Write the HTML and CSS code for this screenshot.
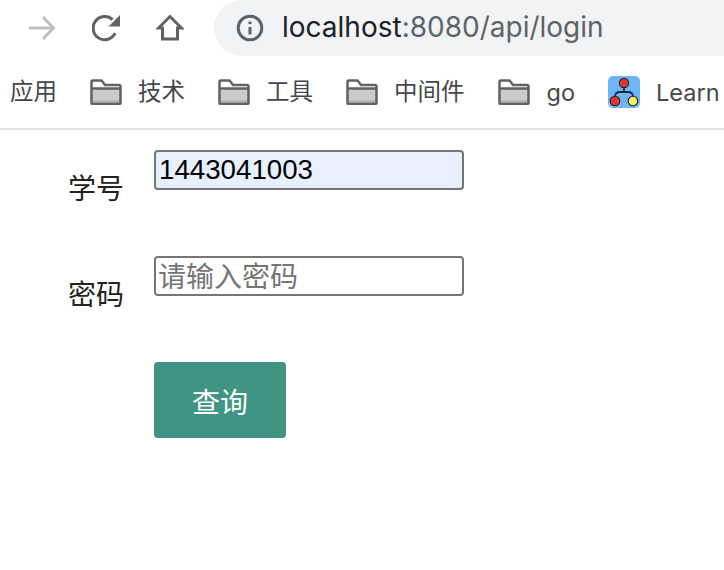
FILE: index.html
```html
<!DOCTYPE html>
<html lang="zh">
<head>
<meta charset="utf-8">
<title>login</title>
<link rel="stylesheet" href="styles.css">
</head>
<body>
<header class="chrome">
  <div class="toolbar">
    <svg class="nav-icon back" viewBox="0 0 28 28"><path d="M1 14H26M15 3 25.500 14 15 25"/></svg>
    <svg class="nav-icon reload" viewBox="0 0 28 28"><path d="M23.200 19.200A11.600 11.600 0 1 1 20.600 5.600"/><path class="fill" d="M28 1v11.500H16.500z"/></svg>
    <svg class="nav-icon home" viewBox="0 0 28 28"><path d="M14 2.500 2.500 14H6.500V25H21.500V14H25.500z"/></svg>
    <div class="omnibox">
      <svg class="info" viewBox="0 0 28 28"><circle cx="14" cy="14" r="11.800"/><path d="M14 13v7.500"/><path d="M14 7.500v2.600"/></svg>
      <span class="url"><span class="host">localhost</span>:8080/api/login</span>
    </div>
  </div>
  <nav class="bookmarks">
    <span class="mark"><span class="cjk">应用</span></span>
    <span class="mark"><svg class="folder" viewBox="0 0 32 26"><path class="body" d="M2 9.500h28V24.500H2z"/><path class="stripe" d="M2 21.500h28v3H2z"/><path class="line" d="M1.500 24V3c0-.8.6-1.500 1.500-1.500h8.500L15 6h14c.9 0 1.500.7 1.500 1.500V24c0 .8-.6 1-1.500 1H3c-.9 0-1.500-.2-1.500-1zM1.500 9.500h29"/></svg><span class="cjk">技术</span></span>
    <span class="mark"><svg class="folder" viewBox="0 0 32 26"><path class="body" d="M2 9.500h28V24.500H2z"/><path class="stripe" d="M2 21.500h28v3H2z"/><path class="line" d="M1.500 24V3c0-.8.6-1.500 1.500-1.500h8.500L15 6h14c.9 0 1.500.7 1.500 1.500V24c0 .8-.6 1-1.500 1H3c-.9 0-1.500-.2-1.500-1zM1.500 9.500h29"/></svg><span class="cjk">工具</span></span>
    <span class="mark"><svg class="folder" viewBox="0 0 32 26"><path class="body" d="M2 9.500h28V24.500H2z"/><path class="stripe" d="M2 21.500h28v3H2z"/><path class="line" d="M1.500 24V3c0-.8.6-1.500 1.500-1.500h8.500L15 6h14c.9 0 1.500.7 1.500 1.500V24c0 .8-.6 1-1.500 1H3c-.9 0-1.500-.2-1.500-1zM1.500 9.500h29"/></svg><span class="cjk">中间件</span></span>
    <span class="mark"><svg class="folder" viewBox="0 0 32 26"><path class="body" d="M2 9.500h28V24.500H2z"/><path class="stripe" d="M2 21.500h28v3H2z"/><path class="line" d="M1.500 24V3c0-.8.6-1.500 1.500-1.500h8.500L15 6h14c.9 0 1.500.7 1.500 1.500V24c0 .8-.6 1-1.500 1H3c-.9 0-1.500-.2-1.500-1zM1.500 9.500h29"/></svg><span class="latin">go</span></span>
    <span class="mark"><svg class="logo" viewBox="0 0 32 32"><rect width="32" height="32" rx="5" fill="#6db5f5"/><path d="M16 10v5M7 22v-1c0-4 3-5 5-5h8c2 0 5 1 5 5v1" fill="none" stroke="#1d2b4a" stroke-width="1.800"/><circle cx="16" cy="7" r="4.600" fill="#e53530" stroke="#222" stroke-width="1.100"/><circle cx="7" cy="25" r="4.800" fill="#e53530" stroke="#222" stroke-width="1.100"/><circle cx="25" cy="25" r="4.800" fill="#f2f26a" stroke="#222" stroke-width="1.100"/></svg>Learn</span>
  </nav>
</header>
<main class="form">
  <div class="row">
    <label class="label" for="sid">学号</label>
    <input class="field filled" id="sid" type="text" value="1443041003">
  </div>
  <div class="row">
    <label class="label" for="pwd">密码</label>
    <input class="field empty" id="pwd" type="text" placeholder="请输入密码">
  </div>
  <button class="submit" type="button">查询</button>
</main>
</body>
</html>
```
FILE: styles.css
```css
* { box-sizing: border-box; }
html, body { margin: 0; height: 100%; overflow: hidden; background: #fff; }
body { font-family: Inter, "Noto Sans CJK SC", sans-serif; color: #222; }

.chrome { height: 130px; border-bottom: 2px solid #dfe0e2; overflow: hidden; }
.toolbar { height: 56px; display: flex; align-items: center; padding-left: 28px; }
.nav-icon { width: 28px; height: 28px; flex: none; fill: none; stroke: #5f6368; stroke-width: 3; }
.nav-icon .fill { fill: #5f6368; stroke: none; }
.back { stroke: #bdbfc2; margin-right: 36px; }
.reload { margin-right: 36px; }
.home { margin-right: 30px; }
.omnibox { flex: 1; height: 56px; display: flex; align-items: center; background: #f1f3f4; border-radius: 28px 0 0 28px; padding-left: 22px; }
.info { width: 28px; height: 28px; flex: none; fill: none; stroke: #5f6368; stroke-width: 3; margin-right: 18px; }
.url { font-size: 28px; line-height: 34px; margin-top: -2px; color: #5f6368; white-space: nowrap; }
.host { color: #202124; }

.bookmarks { height: 72px; display: flex; align-items: center; padding-left: 10px; white-space: nowrap; font-size: 23.500px; color: #45474a; overflow: hidden; }
.mark { display: flex; align-items: center; flex: none; margin-right: 33px; }
.cjk { margin-top: -4px; }
.latin { margin-left: 1px; }
.folder { width: 32px; height: 26px; flex: none; margin-right: 16px; }
.folder .body { fill: #cbcbcb; }
.folder .stripe { fill: #b0b0b0; }
.folder .line { fill: none; stroke: #5f6368; stroke-width: 2.500; }
.logo { width: 32px; height: 32px; flex: none; margin-right: 16px; }

.form { padding: 20px 0 0 68px; }
.row { display: flex; align-items: flex-start; height: 106px; }
.label { font-size: 28px; line-height: 36px; width: 86px; margin-top: 21px; flex: none; color: #222; }
.field { width: 310px; height: 40px; padding: 0 3px; font-family: "Liberation Sans", "Noto Sans CJK SC", sans-serif; font-size: 27.700px; color: #000; background: #fff; border: 2px solid #767676; border-radius: 4px; outline: none; }
.field.filled { background: #e8f0fe; }
.field.empty { padding: 4px 2px 0; }
.field::placeholder { color: #757575; opacity: 1; font-size: 28px; }
.submit { display: block; margin: 0 0 0 86px; width: 132px; height: 76px; padding: 2px 0 0; border: 0; border-radius: 4px; background: #409484; color: #fff; font-family: "Noto Sans CJK SC", sans-serif; font-size: 28px; }
```
